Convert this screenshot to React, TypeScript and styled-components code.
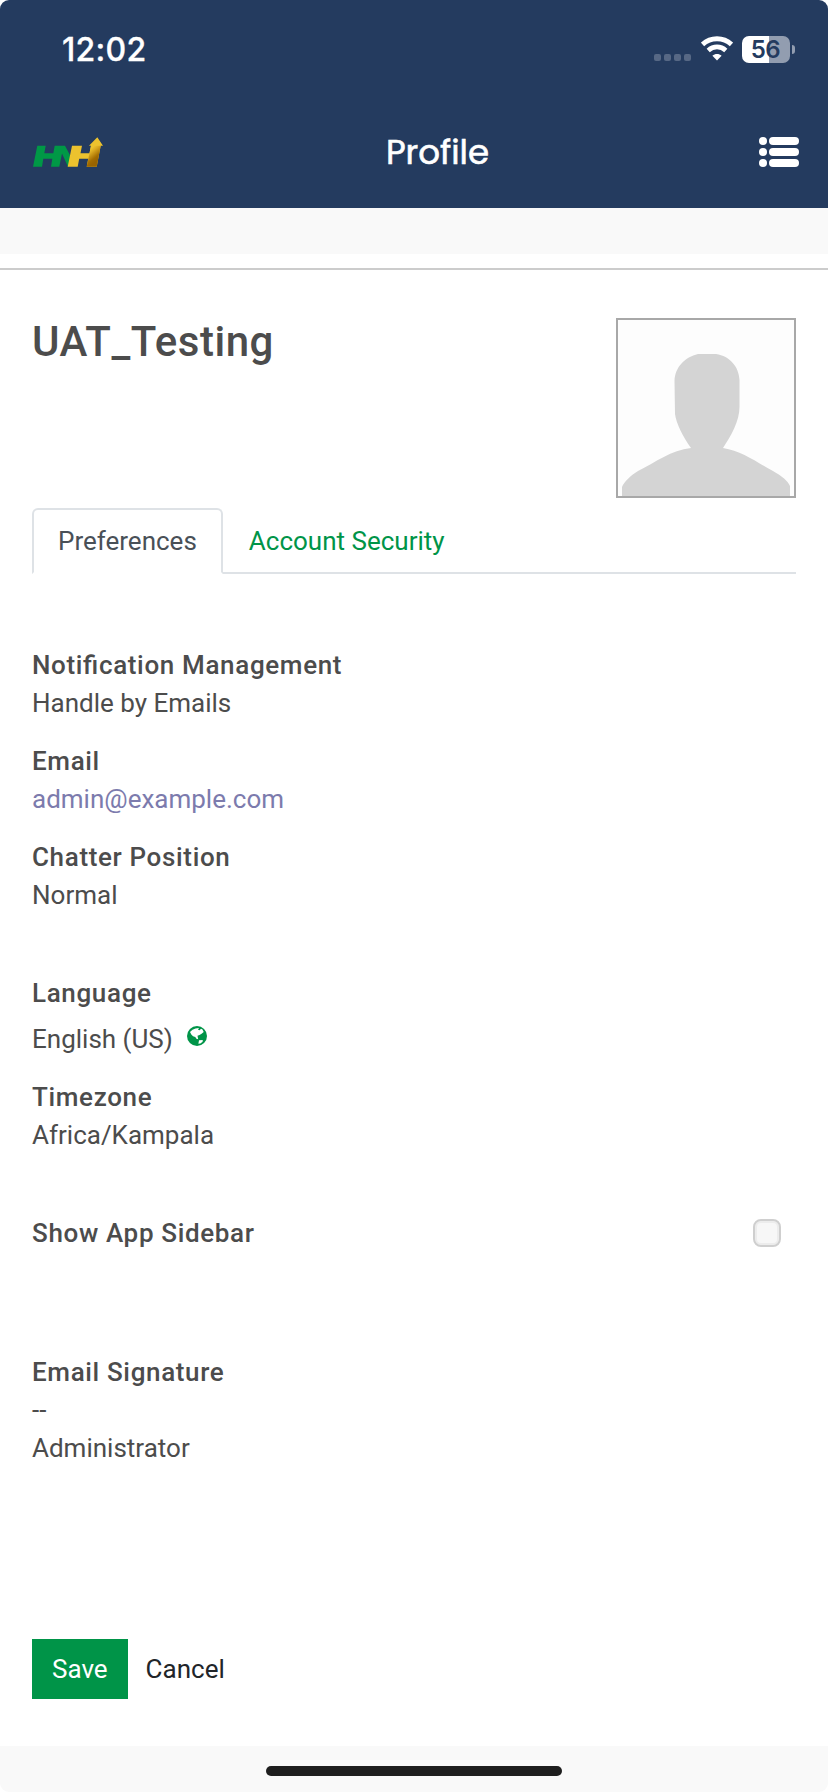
import React from 'react';
import styled, { createGlobalStyle } from 'styled-components';

const Global = createGlobalStyle`
  * { box-sizing: border-box; }
  body { margin: 0; background: #fff; font-family: Roboto, "Liberation Sans", sans-serif; color: #4c4c4c; }
`;

const Screen = styled.div`
  width: 828px;
  height: 1792px;
  display: flex;
  flex-direction: column;
  overflow: hidden;
  border-radius: 9px;
  font-size: 26px;
  line-height: 38px;
`;

const Header = styled.header`
  height: 208px;
  flex: none;
  background: #243b5f;
  color: #fff;
`;

const StatusBar = styled.div`
  height: 100px;
  display: flex;
  justify-content: space-between;
  padding: 0 33px 0 62px;
`;

const Clock = styled.div`
  font: 500 32px/38px Inter, sans-serif;
  letter-spacing: 0.3px;
  padding-top: 31px;
  -webkit-text-stroke: 0.3px #fff;
`;

const StatusIcons = styled.div`
  display: flex;
  align-items: flex-start;
  padding-top: 36px;
`;

const Signal = styled.div`
  display: flex;
  gap: 3px;
  margin: 18px 10px 0 0;
`;

const Dot = styled.span`
  width: 7px;
  height: 7px;
  border-radius: 2px;
  background: #576885;
`;

const Battery = styled.div`
  width: 48px;
  height: 27px;
  margin-left: 9px;
  border-radius: 7px;
  background: linear-gradient(90deg, #fff 27px, #929db0 27px);
  color: #243b5f;
  font: 600 24px/27px Inter, sans-serif;
  text-align: center;
  letter-spacing: -0.4px;
  padding-right: 1px;
`;

const BatteryTip = styled.span`
  width: 3px;
  height: 9px;
  margin: 9px 0 0 2px;
  border-radius: 0 4px 4px 0;
  background: #929db0;
`;

const NavBar = styled.div`
  height: 104px;
  display: grid;
  grid-template-columns: 70px 1fr 40px;
  align-items: center;
  padding: 0 29px 0 33px;
`;

const Title = styled.h1`
  margin: 0;
  padding-left: 13px;
  text-align: center;
  font: 400 34px/40px Poppins, Inter, sans-serif;
  -webkit-text-stroke: 0.6px #fff;
`;

const Strip = styled.div`
  height: 46px;
  flex: none;
  background: #f9f9f9;
`;

const Sheet = styled.main`
  flex: 1;
  margin-top: 14px;
  border-top: 2px solid #ccc;
  padding: 48px 32px 0;
`;

const Identity = styled.section`
  display: flex;
  justify-content: space-between;
  height: 190px;
`;

const Name = styled.h2`
  margin: 0;
  font-size: 42px;
  line-height: 48px;
  font-weight: 500;
  letter-spacing: 0.5px;
`;

const Avatar = styled.div`
  width: 180px;
  height: 180px;
  border: 2px solid #a8a8a8;
  svg { display: block; }
`;

const Tabs = styled.nav`
  display: flex;
  height: 66px;
  border-bottom: 2px solid #dee2e6;
`;

const Tab = styled.a<{ $active?: boolean }>`
  height: 66px;
  padding: 12px 24px 0;
  border: 2px solid ${p => (p.$active ? '#dee2e6' : 'transparent')};
  border-bottom-color: ${p => (p.$active ? '#fff' : 'transparent')};
  border-radius: 6px 6px 0 0;
  color: ${p => (p.$active ? '#495057' : '#009448')};
`;

const Group = styled.section<{ $top: number }>`
  margin-top: ${p => p.$top}px;
  display: flex;
  flex-direction: column;
  gap: 20px;
`;

const FieldBox = styled.div<{ $gap?: number }>`
  display: flex;
  flex-direction: column;
  gap: ${p => p.$gap ?? 0}px;
`;

const Label = styled.span`
  font-weight: 500;
  letter-spacing: 0.65px;
  font-feature-settings: "liga" 1;
`;

const Value = styled.span<{ $link?: boolean }>`
  color: ${p => (p.$link ? '#7c7bad' : 'inherit')};
  svg { margin-left: 14px; vertical-align: 2px; }
`;

const ToggleRow = styled.div`
  display: flex;
  justify-content: space-between;
  align-items: center;
  margin-top: 60px;
  padding-right: 15px;
`;

const Checkbox = styled.span`
  width: 28px;
  height: 28px;
  border: 2px solid #cfcfcf;
  border-radius: 8px;
  background: #f7f7f7;
  box-shadow: inset 0 0 0 2px #ececec;
`;

const Actions = styled.div`
  display: flex;
  margin-top: 172px;
  line-height: 60px;
`;

const Button = styled.button<{ $primary?: boolean }>`
  height: 60px;
  border: 0;
  padding: 0 ${p => (p.$primary ? 20 : 18)}px;
  background: ${p => (p.$primary ? '#009448' : 'transparent')};
  color: ${p => (p.$primary ? '#fff' : '#212529')};
  font: 400 26px/60px Roboto, sans-serif;
`;

const HomeArea = styled.footer`
  height: 46px;
  flex: none;
  padding-top: 20px;
  background: #f9f9f9;
`;

const HomeIndicator = styled.div`
  width: 296px;
  height: 10px;
  margin: 0 auto;
  border-radius: 5px;
  background: #1e1e1e;
`;

const Wifi = () => (
  <svg width="32" height="25" viewBox="0 0 32 25" fill="none" stroke="#fff">
    <path d="M1.500 8.400C9.700 .9 22.300 .9 30.500 8.400" strokeWidth="4.900" />
    <path d="M7.200 14.400C12.300 9.800 19.700 9.800 24.800 14.400" strokeWidth="4.700" />
    <path d="M11.400 19.800C14 17.400 18 17.400 20.600 19.800L16 24.500Z" fill="#fff" stroke="none" />
  </svg>
);

const Logo = () => (
  <svg width="70" height="31" viewBox="0 0 70 31">
    <defs>
      <linearGradient id="gold" x1="55" y1="14" x2="63" y2="24" gradientUnits="userSpaceOnUse">
        <stop offset="0" stopColor="#ecc22e" />
        <stop offset="0.25" stopColor="#d9a820" />
        <stop offset="0.75" stopColor="#a36c00" />
        <stop offset="1" stopColor="#986300" />
      </linearGradient>
    </defs>
    <path fill="#009846" d="M4.300 8.700H12.700L11.300 16.300H20.300L21.700 8.700H32L38 20L36 29.700H35L29 16.500L26.300 29.700H18L19.300 21.700H10.300L9 29.700H0Z" />
    <path fill="#ecc22e" d="M39 8.700H49L47.500 16.300H56.500L58 8.700H56L64.300 0.300L70 8.700H67.700L63.700 29.700H53.700L55.200 21.700H46.200L44.700 29.700H34.700Z" />
    <path fill="url(#gold)" d="M58 8.700H67.700L63.700 29.700H53.700Z" />
  </svg>
);

const ListIcon = () => (
  <svg width="40" height="30" viewBox="0 0 40 30" fill="#fff">
    {[0, 11, 22].map(y => (
      <g key={y}>
        <circle cx="4" cy={y + 4} r="4" />
        <rect x="10" y={y} width="30" height="8" rx="4" />
      </g>
    ))}
  </svg>
);

const Globe = () => (
  <svg width="20" height="20" viewBox="0 0 20 20">
    <circle cx="10" cy="10" r="10" fill="#009448" />
    <path fill="#fff" d="M3 6L5.500 3.700L8.500 2.500L12 2L11 3.800L12.600 4.200L14 2.800L15.500 3.600L16.700 6L14.600 7.800L12.500 9L10.500 9.800L11.200 13.300L9.400 12.700L8.300 11L6 10.200L4.300 8.500Z" />
    <path fill="#fff" d="M12 14.300L15.800 14L15.600 15.800L13.400 17.600L11.400 17.700Z" />
  </svg>
);

const Silhouette = () => (
  <svg width="176" height="176" viewBox="0 0 176 176">
    <rect width="176" height="176" fill="#fdfdfd" />
    <path fill="#d4d4d4" d="M80 34H98C112 36 121 47 121.500 60V87C121.500 101 113 116 105 128C124 131 140 143 155 151C164 156 170 161 172 166V176H4V167C6 162 13 155 20 151C38 142 53 130 73 128C65 117 58 103 57 94L56.500 61C57 47 67 37 80 34Z" />
  </svg>
);

interface FieldProps {
  label: string;
  gap?: number;
  link?: boolean;
  children: React.ReactNode;
}

const Field = ({ label, gap, link, children }: FieldProps) => (
  <FieldBox $gap={gap}>
    <Label>{label}</Label>
    <Value $link={link}>{children}</Value>
  </FieldBox>
);

export default function App() {
  return (
    <Screen>
      <Global />
      <Header>
        <StatusBar>
          <Clock>12:02</Clock>
          <StatusIcons>
            <Signal><Dot /><Dot /><Dot /><Dot /></Signal>
            <Wifi />
            <Battery>56</Battery>
            <BatteryTip />
          </StatusIcons>
        </StatusBar>
        <NavBar>
          <Logo />
          <Title>Profile</Title>
          <ListIcon />
        </NavBar>
      </Header>
      <Strip />
      <Sheet>
        <Identity>
          <Name>UAT_Testing</Name>
          <Avatar><Silhouette /></Avatar>
        </Identity>
        <Tabs>
          <Tab $active>Preferences</Tab>
          <Tab>Account Security</Tab>
        </Tabs>
        <Group $top={72}>
          <Field label="Notification Management">Handle by Emails</Field>
          <Field label="Email" link>admin@example.com</Field>
          <Field label="Chatter Position">Normal</Field>
        </Group>
        <Group $top={60}>
          <Field label="Language" gap={8}>English (US)<Globe /></Field>
          <Field label="Timezone">Africa/Kampala</Field>
        </Group>
        <ToggleRow>
          <Label>Show App Sidebar</Label>
          <Checkbox />
        </ToggleRow>
        <Group $top={101}>
          <Field label="Email Signature">--<br />Administrator</Field>
        </Group>
        <Actions>
          <Button $primary>Save</Button>
          <Button>Cancel</Button>
        </Actions>
      </Sheet>
      <HomeArea><HomeIndicator /></HomeArea>
    </Screen>
  );
}
